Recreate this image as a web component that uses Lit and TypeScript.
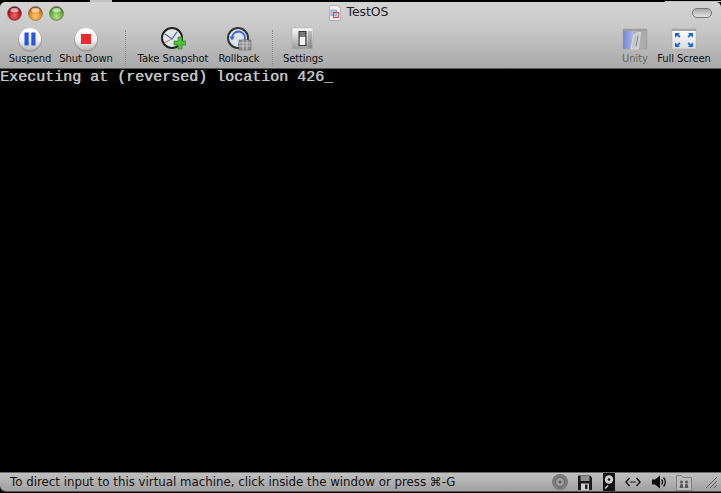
import { LitElement, html, css, svg } from "lit";
import { customElement } from "lit/decorators.js";

const defs = svg`<defs>
  <radialGradient id="gr" cx=".5" cy=".65" r=".6"><stop offset="0" stop-color="#f06a6e"/><stop offset=".6" stop-color="#c4222c"/><stop offset="1" stop-color="#6e1018"/></radialGradient>
  <radialGradient id="gy" cx=".5" cy=".7" r=".65"><stop offset="0" stop-color="#fbd06a"/><stop offset=".6" stop-color="#e88a22"/><stop offset="1" stop-color="#96520c"/></radialGradient>
  <radialGradient id="gg" cx=".5" cy=".7" r=".65"><stop offset="0" stop-color="#b8e88a"/><stop offset=".6" stop-color="#6ab03c"/><stop offset="1" stop-color="#3c7a20"/></radialGradient>
  <linearGradient id="ball" x1="0" y1="0" x2="0" y2="1"><stop offset="0" stop-color="#fff"/><stop offset=".55" stop-color="#f2f2f2"/><stop offset="1" stop-color="#bdbdbd"/></linearGradient>
  <linearGradient id="sw" x1="0" y1="0" x2="0" y2="1"><stop offset="0" stop-color="#fafafa"/><stop offset="1" stop-color="#9a9a9a"/></linearGradient>
  <linearGradient id="un" x1="0" y1="0" x2="1" y2="0"><stop offset="0" stop-color="#6f88dc"/><stop offset=".4" stop-color="#a9b6de"/><stop offset=".5" stop-color="#b4b4b4"/><stop offset="1" stop-color="#a8a8a8"/></linearGradient>
  <linearGradient id="fs" x1="0" y1="0" x2="0" y2="1"><stop offset="0" stop-color="#fff"/><stop offset="1" stop-color="#dcdcdc"/></linearGradient>
</defs>`;

const light = (id: string) => html`<svg class="light" viewBox="0 0 15 15" width="15" height="15">${defs}
  <circle cx="7.5" cy="7.5" r="7" fill="url(#${id})" stroke="#555" stroke-opacity=".55" stroke-width=".8"/>
  <ellipse cx="7.5" cy="4.2" rx="4" ry="2.2" fill="#fff" fill-opacity=".6"/></svg>`;

const ball = (inner: unknown) => html`<svg viewBox="0 0 26 26" width="26" height="26">${defs}
  <circle cx="13" cy="14" r="12" fill="#000" fill-opacity=".12"/>
  <circle cx="13" cy="13" r="11" fill="url(#ball)"/>${inner}</svg>`;

const suspend = ball(svg`<rect x="7.5" y="6.5" width="4.2" height="13" rx=".8" fill="#2a55e0"/><rect x="14.3" y="6.5" width="4.2" height="13" rx=".8" fill="#2a55e0"/>`);
const stop = ball(svg`<rect x="8" y="8" width="10" height="10" fill="#ee2a2e"/>`);

const snapshot = html`<svg viewBox="0 0 26 26" width="26" height="26">${defs}
  <circle cx="12" cy="12" r="10" fill="#e4e7ea" stroke="#222" stroke-width="2"/>
  <path d="M5 8l7 5 5-7" fill="none" stroke="#3a62c8" stroke-width="1.2"/>
  <path d="M4 17l8-4" stroke="#d8685a" stroke-width="1"/>
  <path d="M14 15h4v-4h4v4h4v4h-4v4h-4v-4h-4z" fill="#4cc23a" stroke="#2e7d26" stroke-width=".7"/>
</svg>`;

const rollback = html`<svg viewBox="0 0 26 26" width="26" height="26">${defs}
  <circle cx="12" cy="12" r="10" fill="#dde2ea" stroke="#333" stroke-width="2"/>
  <path d="M6 12a6.5 6.5 0 1 1 6 6.5" fill="none" stroke="#3a62d0" stroke-width="1.8"/>
  <path d="M3.4 10.5h5.4L6 14.5z" fill="#3a62d0"/>
  <rect x="13" y="14" width="12" height="10" fill="#8a8a8a" stroke="#666" stroke-width=".6"/>
  <path d="M13 17h12M13 20h12M17 14v10M21 14v10" stroke="#d8d8d8" stroke-width=".8"/>
</svg>`;

const settings = html`<svg viewBox="0 0 26 26" width="26" height="26">${defs}
  <rect x="2" y="2" width="21" height="21" fill="url(#sw)" stroke="#b0b0b0" stroke-width=".6"/>
  <rect x="8.5" y="5" width="8" height="15" fill="#3a3a3a"/>
  <rect x="9.7" y="6" width="5.6" height="5" fill="#7a7a7a"/>
  <rect x="9.7" y="11" width="5.6" height="8" fill="#f4f4f4"/>
  <rect x="18" y="5" width="4" height="17" fill="#666" fill-opacity=".35"/>
</svg>`;

const unity = html`<svg viewBox="0 0 26 26" width="26" height="26">${defs}
  <rect x="1" y="3" width="24" height="20" fill="url(#un)" stroke="#9a9a9a" stroke-width=".5"/>
  <rect x="1" y="3" width="24" height="2" fill="#9c9c9c"/>
  <path d="M9 23l2.500-13c.5-2 3-3.500 7-3.500l-2.500 16.500z" fill="#c8c8c8" stroke="#dedede" stroke-width="1"/>
  <path d="M14 20l2-10" stroke="#8a8a8a" stroke-width="1"/>
</svg>`;

const fullscreen = html`<svg viewBox="0 0 26 26" width="26" height="26">${defs}
  <rect x="1" y="3" width="24" height="20" fill="url(#fs)" stroke="#aaa" stroke-width=".5"/>
  <rect x="1" y="3" width="24" height="2" fill="#a4a4a4"/>
  <g fill="#1565e8">
    <path d="M4 7h5l-1.500 1.500 2 2-1.200 1.200-2-2L4 11.500z"/>
    <path d="M22 7h-5l1.500 1.500-2 2 1.200 1.200 2-2 2.300 1.800z"/>
    <path d="M4 21h5l-1.500-1.500 2-2-1.200-1.200-2 2L4 16.500z"/>
    <path d="M22 21h-5l1.500-1.500-2-2 1.200-1.200 2 2 2.300-1.800z"/>
  </g>
</svg>`;

const doc = html`<svg viewBox="0 0 14 16" width="14" height="16">
  <path d="M1.500.5h8l3 3v12h-11z" fill="#f2f2f2" stroke="#b0b0b0"/>
  <rect x="3" y="5" width="5.500" height="5.500" fill="#b8c8e0" stroke="#8a9cc0" stroke-width=".8"/>
  <rect x="5.500" y="7.500" width="5" height="5" fill="none" stroke="#c85050" stroke-width="1.200"/>
</svg>`;

const s = (w: number, inner: unknown) => html`<svg viewBox="0 0 ${w} 18" width="${w}" height="18">${inner}</svg>`;
const statusIcons = [
  s(16, svg`<circle cx="8" cy="9" r="8" fill="#7b7b7b"/><circle cx="8" cy="9" r="4.500" fill="#a0a0a0" stroke="#666" stroke-width="1"/><circle cx="8" cy="9" r="1.600" fill="#5a5a5a"/>`),
  s(14, svg`<path d="M0 2.500h12l2 2v12.500H0z" fill="#1a1a1a"/><rect x="2.500" y="3" width="9" height="5" fill="#8f8f8f"/><rect x="3" y="10.500" width="8" height="6.500" fill="#d0d0d0"/><rect x="7" y="11.500" width="2.500" height="4.500" fill="#222"/>`),
  s(12, svg`<rect x="0" y="0" width="12" height="18" fill="#111"/><circle cx="6" cy="6.500" r="4.200" fill="#cfcfcf"/><circle cx="6" cy="6.500" r="1.300" fill="#111"/><path d="M2 15.500l3-3" stroke="#ddd" stroke-width="1.200"/>`),
  s(16, svg`<path d="M4.500 5L1 9l3.500 4M11.500 5L15 9l-3.500 4" fill="none" stroke="#111" stroke-width="1.400"/><path d="M5.500 9h1.200m.7 0h1.200m.7 0h1.200" stroke="#111" stroke-width="1.500"/>`),
  s(14, svg`<path d="M0 6.500h3L8 2.500v13L3 11.500H0z" fill="#0c0c0c"/><path d="M9.500 6.500a3.500 3.500 0 0 1 0 5M11.500 4.500a6.500 6.500 0 0 1 0 9" fill="none" stroke="#111" stroke-width="1.300"/>`),
  s(16, svg`<path d="M.5 2.500h5l1.500 2h8.500v13H.5z" fill="#bcbcbc" stroke="#808080"/><g fill="#555"><circle cx="5.500" cy="9" r="1.500"/><path d="M3.500 15l1-4h2l1 4z"/><circle cx="10.500" cy="9" r="1.500"/><path d="M8.500 15l1-4h2l1 4z"/></g>`),
];

@customElement("app-root")
export class AppRoot extends LitElement {
  static styles = css`
    :host { display: block; width: 721px; height: 493px; background: #000; overflow: hidden; position: relative; }
    .win { display: flex; flex-direction: column; height: 492px; padding-top: 2px; box-sizing: border-box; }
    .toolbar { height: 67px; flex: none; box-sizing: border-box; border-radius: 5px 5px 0 0;
      background: linear-gradient(#d4d4d4, #c8c8c8 40%, #a9a9a9); border-bottom: 1px solid #5c5c5c;
      display: flex; flex-direction: column; font-family: "DejaVu Sans", sans-serif; color: #111; }
    .titlebar { height: 21px; flex: none; display: flex; align-items: center; padding: 1px 9px 0 7px; box-sizing: border-box; }
    .lights { display: flex; gap: 6px; }
    .light { display: block; }
    .title { flex: 1; display: flex; justify-content: center; align-items: center; gap: 5px; padding-right: 40px;
      font-size: 12.500px; color: #222; line-height: 14px; }
    .title span { margin-top: -2px; letter-spacing: -0.1px; }
    .pill { width: 20px; height: 10px; border-radius: 5px; border: 1px solid #777;
      background: linear-gradient(#aaa, #e2e2e2); box-sizing: border-box; }
    .tools { flex: 1; display: flex; align-items: flex-start; padding: 3px 11px 0 2px; }
    .tool { display: flex; flex-direction: column; align-items: center; flex: none; font-size: 10px; letter-spacing: -0.1px; line-height: 13px; gap: 0; white-space: nowrap; }
    .tool svg { display: block; }
    .w56 { width: 56px; } .w76 { width: 76px; } .w50 { width: 50px; } .w46 { width: 46px; } .w52 { width: 52px; }
    .sep { width: 0; height: 36px; border-left: 1px dotted #8a8a8a; margin: 4px 9px 0 11px; flex: none; }
    .sep.b { margin: 4px 5px 0 5px; }
    .spacer { flex: 1; }
    .dim { color: #666; }
    .console { flex: 1; background: #000; color: #c4c4c4; font-family: "Liberation Mono", monospace; font-size: 15px; line-height: 16px; white-space: pre; padding-top: 1px; text-shadow: 0.5px 0 0 #c4c4c4; }
    .status { height: 20px; flex: none; box-sizing: border-box; border-radius: 0 0 0 6px; display: flex; align-items: center;
      background: linear-gradient(#c0c0c0, #a0a0a0); border-top: 1px solid #6a6a6a; border-bottom: 1px solid #555; padding: 0 3px 0 10px;
      font-family: "DejaVu Sans", sans-serif; font-size: 11.800px; color: #111; }
    .msg { flex: 1; white-space: nowrap; }
    .icons { display: flex; align-items: center; gap: 10.500px; margin-right: 12px; }
    .icons svg { display: block; }
    .grip { display: block; }
    .sliver { position: absolute; background: #c4c4c4; }
    .s1 { left: 90px; top: 0; width: 22px; height: 2px; }
    .s2 { left: 665px; top: 1px; width: 56px; height: 1px; }
  `;

  render() {
    return html`<div class="win">
      <div class="toolbar">
        <div class="titlebar">
          <div class="lights">${light("gr")}${light("gy")}${light("gg")}</div>
          <div class="title">${doc}<span>TestOS</span></div>
          <div class="pill"></div>
        </div>
        <div class="tools">
          <div class="tool w56">${suspend}<span>Suspend</span></div>
          <div class="tool w56">${stop}<span>Shut Down</span></div>
          <div class="sep"></div>
          <div class="tool w76">${snapshot}<span>Take Snapshot</span></div>
          <div class="tool w56">${rollback}<span>Rollback</span></div>
          <div class="sep b"></div>
          <div class="tool w50">${settings}<span>Settings</span></div>
          <div class="spacer"></div>
          <div class="tool w46 dim">${unity}<span>Unity</span></div>
          <div class="tool w52">${fullscreen}<span>Full Screen</span></div>
        </div>
      </div>
      <div class="console">Executing at (reversed) location 426_</div>
      <div class="status">
        <span class="msg">To direct input to this virtual machine, click inside the window or press ⌘-G</span>
        <div class="icons">${statusIcons}</div>
        <svg class="grip" viewBox="0 0 14 14" width="14" height="14"><path d="M2 13L13 2M6 13l7-7M10 13l3-3" stroke="#666" stroke-width="1"/></svg>
      </div>
      <div class="sliver s1"></div>
      <div class="sliver s2"></div>
    </div>`;
  }
}
